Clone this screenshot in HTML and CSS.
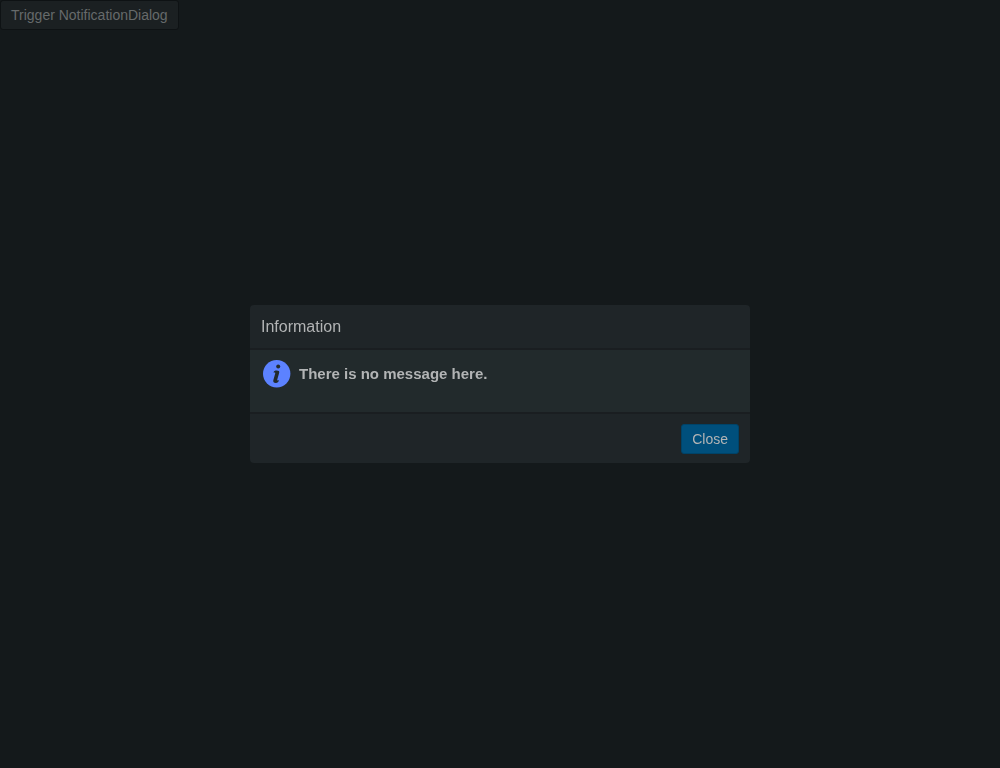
FILE: index.html
```html
<!DOCTYPE html>
<html lang="en">
<head>
<meta charset="utf-8">
<meta name="viewport" content="width=device-width, initial-scale=1">
<title>Notification Dialog</title>
<link rel="stylesheet" href="styles.css">
</head>
<body>
<button class="trigger" type="button">Trigger NotificationDialog</button>
<div class="overlay">
<section class="dialog" role="dialog" aria-labelledby="title">
<header class="dialog-header"><h1 class="dialog-title" id="title">Information</h1></header>
<div class="dialog-body">
<svg class="info-icon" viewBox="0 0 28 28" aria-hidden="true"><circle cx="13.700" cy="13.700" r="13.700" fill="#5c82ff"/><circle cx="15.200" cy="6.600" r="2" fill="#222a2c"/><path d="M10.700 12.200c0-1 1.200-1.700 3-1.700 1.900 0 2.900.8 2.500 2.300l-2 6.900c-.2.900.5.800 1.500.3.300 1.700-1 2.900-2.900 2.900-2 0-2.900-1-2.500-2.600l1.900-6.700c.3-1-.3-1.200-1.500-.9z" fill="#222a2c"/></svg>
<strong class="message">There is no message here.</strong>
</div>
<footer class="dialog-footer"><button class="close" type="button">Close</button></footer>
</section>
</div>
</body>
</html>
```
FILE: styles.css
```css
* { box-sizing: border-box; }
body {
  margin: 0;
  min-height: 100vh;
  background: #14191b;
  font: 14px/20px "Liberation Sans", Arial, sans-serif;
}
button {
  height: 30px;
  padding: 4px 10px;
  border: 1px solid;
  border-radius: 3px;
  font: inherit;
}
.trigger {
  display: block;
  color: #666a6b;
  background: #1b2022;
  border-color: #0e1214;
}
.overlay {
  position: fixed;
  inset: 0;
  display: flex;
  align-items: center;
  justify-content: center;
}
.dialog {
  width: 50%;
  overflow: hidden;
  border-radius: 4px;
  background: #1f2528;
  color: #b2b4b5;
}
.dialog-header {
  padding: 12px 11px 11px;
  border-bottom: 2px solid #1a1e21;
}
.dialog-title {
  margin: 0;
  font-size: 16px;
  font-weight: 400;
  line-height: 20px;
}
.dialog-body {
  display: flex;
  align-items: flex-start;
  gap: 8px;
  min-height: 62px;
  padding: 10px 13px;
  background: #222a2c;
}
.info-icon { width: 28px; height: 28px; }
.message { font-size: 15px; line-height: 28px; }
.dialog-footer {
  display: flex;
  justify-content: flex-end;
  padding: 10px 11px 9px;
  border-top: 2px solid #1a1e21;
}
.close {
  color: #b2b4b5;
  background: #004f7c;
  border-color: #004368;
}
```
